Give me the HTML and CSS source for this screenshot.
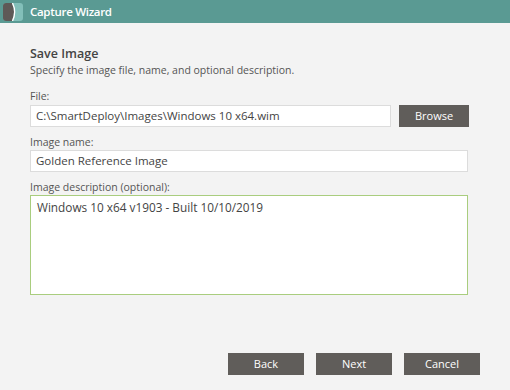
FILE: index.html
```html
<!DOCTYPE html>
<html>
<head>
<meta charset="utf-8">
<link rel="stylesheet" href="styles.css">
</head>
<body>
<div class="window">
  <div class="titlebar">
    <svg class="logo" width="20" height="18" viewBox="0 0 20 18">
      <rect x="0" y="0" width="20" height="18" rx="3" fill="#82bfb9"/>
      <path d="M3 0 H9 Q13 9 9 18 H3 Q0 18 0 15 V3 Q0 0 3 0 Z" fill="#5e5957"/>
      <path d="M9.5 0 Q13.8 9 9.5 18" fill="none" stroke="#ffffff" stroke-width="1.3"/>
    </svg>
    <span class="title">Capture Wizard</span>
  </div>
  <div class="content">
    <div class="heading">Save Image</div>
    <div class="subheading">Specify the image file, name, and optional description.</div>
    <div class="label first">File:</div>
    <div class="filerow">
      <div class="input file">C:\SmartDeploy\Images\Windows 10 x64.wim</div>
      <div class="btn browse">Browse</div>
    </div>
    <div class="label">Image name:</div>
    <div class="input">Golden Reference Image</div>
    <div class="label">Image description (optional):</div>
    <div class="textarea">Windows 10 x64 v1903 - Built 10/10/2019</div>
  </div>
  <div class="footer">
    <div class="btn">Back</div>
    <div class="btn">Next</div>
    <div class="btn">Cancel</div>
  </div>
</div>
</body>
</html>
```
FILE: styles.css
```css
html, body {
  margin: 0;
  padding: 0;
}
body {
  width: 510px;
  height: 390px;
  background: #f3f3f3;
  font-family: "Open Sans", "Noto Sans", sans-serif;
  color: #454545;
  overflow: hidden;
}
.window {
  display: flex;
  flex-direction: column;
  height: 390px;
}
.titlebar {
  height: 23px;
  background: #5a9a93;
  display: flex;
  align-items: center;
  padding-left: 3px;
  gap: 7px;
  flex-shrink: 0;
}
.logo {
  display: block;
}
.title {
  color: #ffffff;
  font-weight: 600;
  font-size: 11.5px;
  letter-spacing: -0.3px;
}
.content {
  padding: 22px 42px 0 30px;
  display: flex;
  flex-direction: column;
}
.heading {
  font-size: 12.5px;
  font-weight: 600;
  line-height: 18px;
  color: #444;
}
.subheading {
  font-size: 10.5px;
  line-height: 15px;
  color: #555;
}
.label {
  font-size: 10.5px;
  line-height: 14px;
  color: #555;
  margin-top: 8px;
  margin-bottom: 1px;
}
.label.first {
  margin-top: 11px;
  margin-bottom: 2px;
}
.filerow {
  display: flex;
  gap: 8px;
}
.input {
  height: 20px;
  background: #fff;
  border: 1px solid #dcdcdc;
  font-size: 11.5px;
  line-height: 20px;
  padding-left: 5px;
  color: #444;
}
.input.file {
  flex: 1;
}
.btn {
  width: 76px;
  height: 22px;
  background: #605d5a;
  color: #fff;
  font-size: 11px;
  line-height: 22px;
  text-align: center;
}
.btn.browse {
  width: 70px;
  margin-right: -1px;
}
.textarea {
  background: #fff;
  border: 1px solid #a9cd7e;
  font-size: 11.8px;
  line-height: 16px;
  padding: 3px 6px;
  color: #444;
  box-sizing: border-box;
  height: 100px;
}
.footer {
  margin-top: auto;
  display: flex;
  justify-content: flex-end;
  gap: 12px;
  padding: 0 30px 15px 0;
}
```
